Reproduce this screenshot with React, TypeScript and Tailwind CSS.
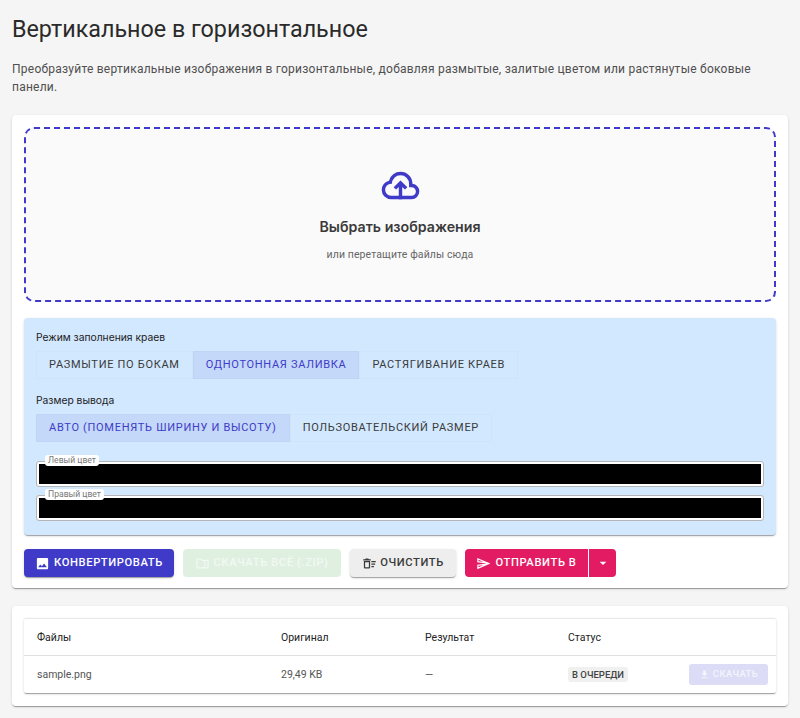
const cardShadow = "shadow-[0_2px_1px_-1px_rgba(0,0,0,0.2),0_1px_1px_0_rgba(0,0,0,0.14),0_1px_3px_0_rgba(0,0,0,0.12)]";

function Icon({ d, className }: { d: string; className: string }) {
  return (
    <svg viewBox="0 0 24 24" fill="currentColor" fillRule="evenodd" className={className}>
      <path d={d} />
    </svg>
  );
}

const icons = {
  image:
    "M21 19V5c0-1.1-.9-2-2-2H5c-1.1 0-2 .9-2 2v14c0 1.1.9 2 2 2h14c1.1 0 2-.9 2-2zM8.5 13.5l2.5 3.01L14.5 12l4.5 6H5l3.5-4.5z",
  zip: "M20 6h-8l-2-2H4c-1.1 0-2 .9-2 2v12c0 1.1.9 2 2 2h16c1.1 0 2-.9 2-2V8c0-1.1-.9-2-2-2zm-4 10h2v-2h-2v-2h2v-2h-2V8h4v10h-4v-2zm0 0h-2v2H4V6h5.17l2 2H14v2h2v2h-2v2h2v2z",
  sweep:
    "M15 16h4v2h-4zm0-8h7v2h-7zm0 4h6v2h-6zM3 18c0 1.1.9 2 2 2h6c1.1 0 2-.9 2-2V8H3v10zm2-8h6v8H5v-8zm5-6H6L5 5H2v2h12V5h-3z",
  send: "M4.01 6.03l7.51 3.22-7.52-1 .01-2.22m7.5 8.72L4 17.97v-2.22l7.51-1M2.01 3L2 10l15 2-15 2 .01 7L23 12 2.01 3z",
  drop: "M7 10l5 5 5-5z",
  download: "M19 9h-4V3H9v6H5l7 7 7-7zM5 18v2h14v-2H5z",
};

function CloudUpload() {
  return (
    <svg viewBox="0 0 24 24" fill="currentColor" className="h-[41px] w-[41px] text-[#3f3bc8]">
      <path
        fillRule="evenodd"
        d="M6.5 20q-2.28 0-3.89-1.57Q1 16.85 1 14.58q0-1.95 1.17-3.48 1.18-1.53 3.08-1.95.63-2.3 2.5-3.72Q9.63 4 12 4q2.93 0 4.96 2.04Q19 8.07 19 11q1.73.2 2.86 1.49 1.14 1.28 1.14 3.01 0 1.88-1.31 3.19T18.5 20ZM6.5 18h12q1.05 0 1.78-.72.72-.73.72-1.78t-.72-1.78Q19.55 13 18.5 13H17v-2q0-2.07-1.46-3.54Q14.08 6 12 6 9.93 6 8.46 7.46 7 8.93 7 11h-.5q-1.45 0-2.47 1.03Q3 13.05 3 14.5t1.03 2.47Q5.05 18 6.5 18Z"
      />
      <path d="M11 20v-7.15L9.4 14.4 8 13l4-4 4 4-1.4 1.4-1.6-1.55V20Z" />
    </svg>
  );
}

function Toggle({ label, active }: { label: string; active?: boolean }) {
  return (
    <div
      className={`flex h-[28px] items-center border border-black/[0.015] px-3 text-[11px] font-normal tracking-[0.7px] ${
        active ? "bg-[#c4d8f9] text-[#3f3bc8]" : "text-[#3a3a3a]"
      }`}
    >
      {label}
    </div>
  );
}

function ColorField({ label }: { label: string }) {
  return (
    <div className="relative h-[26px] rounded-[3px] border border-[#b5b5b5] bg-white p-[2px]">
      <div className="h-full bg-black" />
      <span className="absolute -top-[7px] left-[8px] rounded-[3px] bg-white px-[3px] text-[8.6px] leading-[11px] text-[#777]">
        {label}
      </span>
    </div>
  );
}

export default function App() {
  return (
    <div className="min-h-[718px] bg-[#f5f5f5] px-3 pt-[13px] font-['Roboto',sans-serif] text-[#222]">
      <h1 className="text-[23.3px] leading-[32px] font-normal text-[#2a2a2a]">Вертикальное в горизонтальное</h1>
      <p className="mt-[15px] text-[12px] leading-[18px] tracking-[0.24px] text-[#4f4f4f]">
        Преобразуйте вертикальные изображения в горизонтальные, добавляя размытые, залитые цветом или растянутые боковые
        панели.
      </p>

      <div className={`mt-[19px] rounded-[4px] bg-white px-3 pt-3 pb-[11px] ${cardShadow}`}>
        <div className="flex h-[175px] flex-col items-center rounded-[10px] border-2 border-dashed border-[#3f3bc8] bg-[#fafafa] pt-[36px]">
          <CloudUpload />
          <div className="mt-[11px] font-['Inter',sans-serif] text-[14.2px] leading-[20px] font-semibold text-[#3a3a3a]">
            Выбрать изображения
          </div>
          <div className="mt-[10px] text-[10.5px] leading-[16px] tracking-[0.1px] text-[#666]">или перетащите файлы сюда</div>
        </div>

        <div className={`mt-[16px] rounded-[4px] bg-[#d2e8fe] px-3 pt-[12px] pb-[14px] ${cardShadow}`}>
          <div className="font-['Inter',sans-serif] text-[10.3px] leading-[14px] text-[#222]">Режим заполнения краев</div>
          <div className="mt-[7px] flex">
            <Toggle label="РАЗМЫТИЕ ПО БОКАМ" />
            <Toggle label="ОДНОТОННАЯ ЗАЛИВКА" active />
            <Toggle label="РАСТЯГИВАНИЕ КРАЕВ" />
          </div>
          <div className="mt-[14px] font-['Inter',sans-serif] text-[10.3px] leading-[14px] text-[#222]">Размер вывода</div>
          <div className="mt-[7px] flex">
            <Toggle label="АВТО (ПОМЕНЯТЬ ШИРИНУ И ВЫСОТУ)" active />
            <Toggle label="ПОЛЬЗОВАТЕЛЬСКИЙ РАЗМЕР" />
          </div>
          <div className="mt-[19px] flex flex-col gap-[8px]">
            <ColorField label="Левый цвет" />
            <ColorField label="Правый цвет" />
          </div>
        </div>

        <div className="mt-[14px] flex gap-[9px]">
          <button className={`flex h-[28px] w-[150px] items-center justify-center gap-[4px] rounded-[4px] bg-[#3f3bc8] text-[11.2px] font-medium tracking-[0.6px] text-white ${cardShadow}`}>
            <Icon d={icons.image} className="h-[15px] w-[15px]" />
            КОНВЕРТИРОВАТЬ
          </button>
          <button className="flex h-[28px] w-[158px] items-center justify-center gap-[3px] rounded-[4px] bg-[#dff0e1] text-[11.2px] font-medium tracking-[0.6px] text-[#f2f8f2]">
            <Icon d={icons.zip} className="h-[15px] w-[15px]" />
            СКАЧАТЬ ВСЁ (.ZIP)
          </button>
          <button className={`flex h-[28px] w-[106px] items-center justify-center gap-[3px] rounded-[4px] bg-[#eeeeee] text-[11.2px] font-medium tracking-[0.6px] text-[#3a3a3a] ${cardShadow}`}>
            <Icon d={icons.sweep} className="h-[15px] w-[15px]" />
            ОЧИСТИТЬ
          </button>
          <div className="flex">
            <button className="flex h-[28px] w-[124px] items-center justify-center gap-[4px] rounded-l-[4px] border-r border-white bg-[#e31b63] text-[11.2px] font-medium tracking-[0.6px] text-white">
              <Icon d={icons.send} className="h-[15px] w-[15px]" />
              ОТПРАВИТЬ В
            </button>
            <button className="flex h-[28px] w-[27px] items-center justify-center rounded-r-[4px] bg-[#e31b63] text-white">
              <Icon d={icons.drop} className="h-[16px] w-[16px]" />
            </button>
          </div>
        </div>
      </div>

      <div className={`mt-[18px] rounded-[4px] bg-white px-3 pt-3 pb-[13px] ${cardShadow}`}>
        <div className={`rounded-[2px] border-t border-[#e8e8e8] ${cardShadow}`}>
          <div className="grid h-[37px] grid-cols-[244px_144px_143px_1fr] items-center border-b border-[#e0e0e0] pt-[1px] pl-[13px] text-[10.5px] text-[#222]">
            <div>Файлы</div>
            <div>Оригинал</div>
            <div>Результат</div>
            <div>Статус</div>
          </div>
          <div className="grid h-[37px] grid-cols-[244px_144px_143px_1fr] items-center pl-[13px] text-[10.5px] text-[#555]">
            <div>sample.png</div>
            <div>29,49 KB</div>
            <div>—</div>
            <div className="flex items-center justify-between pr-[8px]">
              <span className="rounded-[3px] bg-[#f0f0f0] px-[4px] py-[2px] text-[9.5px] leading-[11px] font-medium text-[#444]">
                В ОЧЕРЕДИ
              </span>
              <button className="flex h-[21px] w-[79px] items-center justify-center gap-[3px] rounded-[3px] bg-[#dcdcf6] text-[9.5px] font-medium tracking-[0.4px] text-[#f4f4fc]">
                <Icon d={icons.download} className="h-[11px] w-[11px]" />
                СКАЧАТЬ
              </button>
            </div>
          </div>
        </div>
      </div>
    </div>
  );
}
